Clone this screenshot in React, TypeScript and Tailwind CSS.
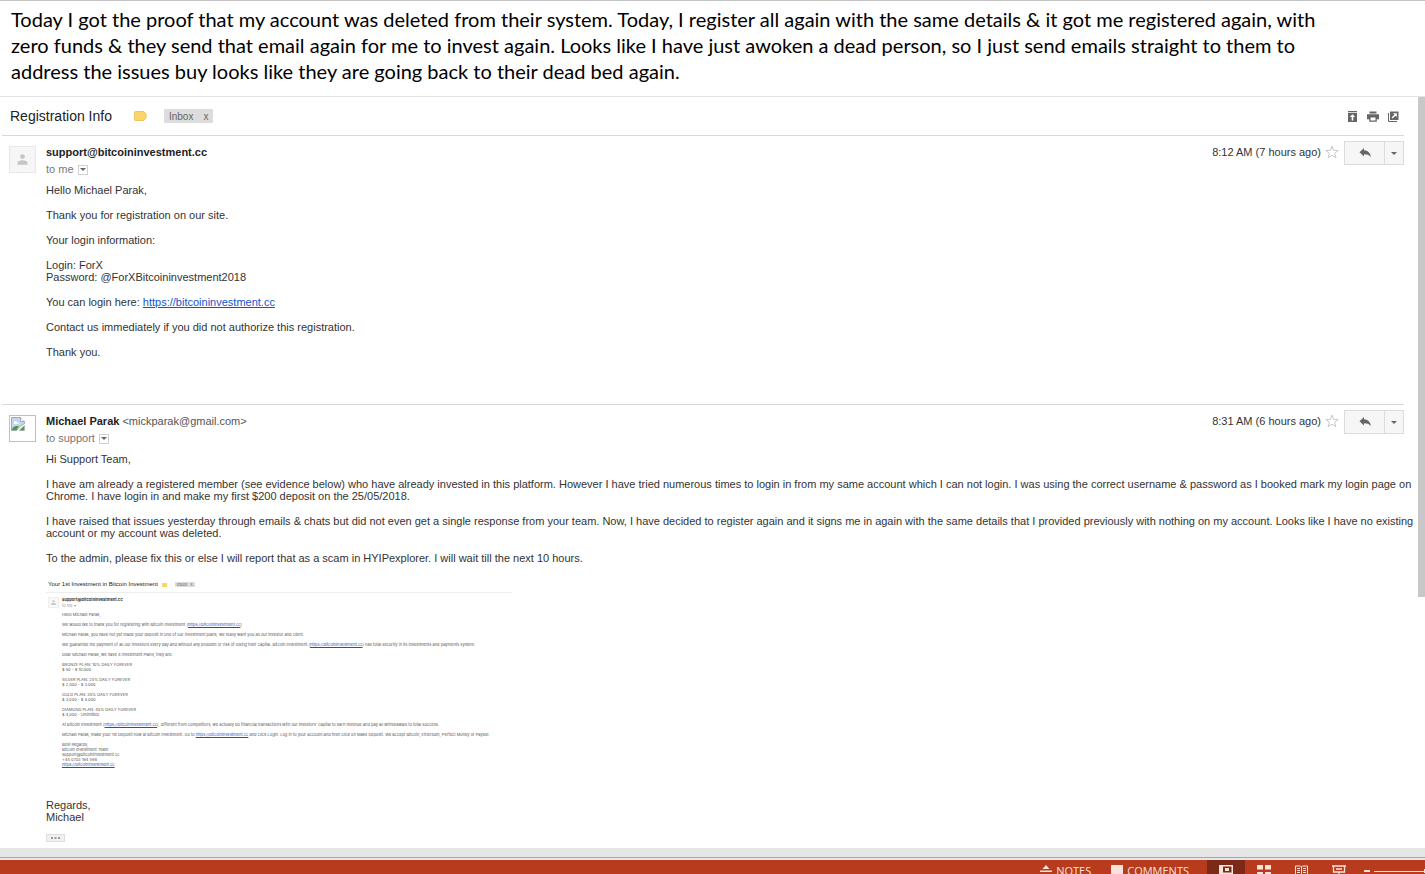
import type { ReactNode } from 'react';

const SITE = 'https://bitcoininvestment.cc';

function StarIcon() {
  return (
    <svg width="14" height="14" viewBox="0 0 14 14" fill="#fff" stroke="#c9c9c9" strokeWidth="1">
      <path d="M7 1l1.600 4.300 4.600.2-3.600 2.800 1.300 4.400L7 10.200l-3.900 2.500 1.300-4.400L.8 5.500l4.600-.2z" />
    </svg>
  );
}

function ReplyIcon() {
  return (
    <svg width="12" height="10" viewBox="0 0 12 10" fill="#666">
      <path d="M5 0v2.300c4 .2 6.400 2.600 6.900 7C10.200 6.900 8.200 6.300 5 6.300V8.600L.5 4.300z" />
    </svg>
  );
}

function Caret() {
  return (
    <svg width="6" height="3" viewBox="0 0 6 3" fill="#666">
      <path d="M0 0h6L3 3z" />
    </svg>
  );
}

function PersonAvatar() {
  return (
    <div className="flex size-[27px] shrink-0 items-center justify-center border border-[#e8e8e8] bg-[#f6f6f6]">
      <svg width="11" height="11" viewBox="0 0 11 11" fill="#c6c6c6">
        <circle cx="5.500" cy="2.600" r="2.400" />
        <path d="M.5 10.800V9c0-1.800 3-2.700 5-2.700s5 .9 5 2.700v1.800z" />
      </svg>
    </div>
  );
}

function BrokenAvatar() {
  return (
    <div className="size-[27px] shrink-0 border border-[#c0c0c0] bg-white p-px">
      <svg width="14" height="14" viewBox="0 0 14 14">
        <path d="M.5.5h9l4 4v2L9 9.500 5.500 13.500h-5z" fill="#c5d6f1" stroke="#a3a9b2" />
        <path d="M9.500.5v4h4" fill="#fff" stroke="#a3a9b2" />
        <path d="M3 5.500a1.500 1.500 0 013 0h1.500V7H2.500z" fill="#fff" />
        <path d="M1 13c0-3 3-4.500 7-4L5.500 13z" fill="#4f9a3e" />
        <path d="M13.500 8.500v5H8z" fill="#4f9a3e" stroke="#a3a9b2" strokeWidth=".5" />
      </svg>
    </div>
  );
}

interface MessageProps {
  avatar: ReactNode;
  from: ReactNode;
  to: string;
  time: string;
  children: ReactNode;
}

function Message({ avatar, from, to, time, children }: MessageProps) {
  return (
    <article className="ml-0.5 flex border-t border-[#d8d8d8] pt-[10px] pl-[7px]">
      {avatar}
      <div className="ml-[10px] min-w-0 flex-1">
        <header className="-mt-[5px] flex items-start">
          <div className="flex-1">
            <div className="mt-[5px] leading-[13px]">{from}</div>
            <div className="mt-1 flex items-center leading-[13px] text-[#777]">
              {to}
              <button
                type="button"
                aria-label="Show details"
                className="ml-1 flex size-[10px] items-center justify-center border border-[#d0d0d0] bg-white"
              >
                <Caret />
              </button>
            </div>
          </div>
          <span className="mt-[5px] leading-[13px]">{time}</span>
          <button type="button" aria-label="Star" className="mt-1 ml-1">
            <StarIcon />
          </button>
          <div className="ml-[5px] flex h-6 w-[60px] border border-[#dcdcdc] bg-[#f6f6f6]">
            <button type="button" aria-label="Reply" className="flex flex-1 items-center justify-center">
              <ReplyIcon />
            </button>
            <button
              type="button"
              aria-label="More"
              className="flex w-[19px] items-center justify-center border-l border-[#dcdcdc]"
            >
              <Caret />
            </button>
          </div>
        </header>
        {children}
      </div>
    </article>
  );
}

function SiteLink() {
  return (
    <a href={SITE} className="text-[#1155cc] underline">
      {SITE}
    </a>
  );
}

function Attachment() {
  return (
    <section className="mt-[13px] w-[466px] font-['Inter',sans-serif] text-[4px] leading-[5px] whitespace-nowrap text-[#555]">
      <div className="flex h-4 items-center border-b border-[#eee] pl-0.5">
        <h3 className="font-['Liberation_Sans',Arial,sans-serif] text-[6px] text-[#222]">
          Your 1st Investment in Bitcoin Investment
        </h3>
        <span className="ml-1 h-1 w-[5px] bg-[#f8d568]" />
        <span className="ml-2 bg-[#ddd] px-0.5 text-[#666]">Inbox &nbsp; x</span>
      </div>
      <div className="flex pt-1 pl-0.5">
        <div className="flex size-[11px] shrink-0 items-center justify-center border border-[#eee] bg-[#f8f8f8]">
          <svg width="5" height="5" viewBox="0 0 11 11" fill="#c6c6c6">
            <circle cx="5.500" cy="2.600" r="2.400" />
            <path d="M.5 10.800V9c0-1.800 3-2.700 5-2.700s5 .9 5 2.700v1.800z" />
          </svg>
        </div>
        <div className="ml-[3px] flex flex-col gap-[5px]">
          <div className="-mb-px">
            <p className="font-bold text-[#333]">support@bitcoininvestment.cc</p>
            <p className="mt-px text-[#999]">to me ▾</p>
          </div>
          <p>Hello Michael Parak,</p>
          <p>
            We would like to thank you for registering with Bitcoin Investment (<SiteLink />)
          </p>
          <p>
            Michael Parak, you have not yet made your deposit in one of our investment plans, we really want you
            as our investor and client
          </p>
          <p>
            We guarantee the payment of all our investors every day and without any problem or risk of losing
            their capital. Bitcoin Investment (<SiteLink />) has total security in its investments and payments
            system.
          </p>
          <p>Dear Michael Parak, we have 4 Investment Plans, they are:</p>
          <p>
            BRONZE PLAN: 10% DAILY FOREVER
            <br />$ 50 - $ 10.000
          </p>
          <p>
            SILVER PLAN: 25% DAILY FOREVER
            <br />$ 2,000 - $ 3.000
          </p>
          <p>
            GOLD PLAN: 35% DAILY FOREVER
            <br />$ 3,000 - $ 4.000
          </p>
          <p>
            DIAMOND PLAN: 45% DAILY FOREVER
            <br />$ 4,000 - Unlimited
          </p>
          <p>
            At Bitcoin Investment (<SiteLink />), different from competitors, we actually do financial
            transactions with our investors' capital to earn revenue and pay all withdrawals to total success.
          </p>
          <p>
            Michael Parak, make your 1st Deposit now at Bitcoin Investment. Go to <SiteLink /> and click Login.
            Log in to your account and then click on Make Deposit. We accept Bitcoin, Ethereum, Perfect Money or
            Payeer.
          </p>
          <p>
            Best Regards,
            <br />
            Bitcoin Investment Team
            <br />
            support@bitcoininvestment.cc
            <br />
            +44 0703 194 569
            <br />
            <SiteLink />
          </p>
        </div>
      </div>
    </section>
  );
}

function HeaderActions() {
  return (
    <div className="flex gap-[9px]">
      <button type="button" aria-label="Collapse all">
        <svg width="11" height="11" viewBox="0 0 11 11">
          <path d="M1 0h9v1.300H1zM1 2h9v9H1z" fill="#666" />
          <path d="M5.500 3.300L8.200 6H6.300v3.500H4.700V6H2.800z" fill="#fff" />
        </svg>
      </button>
      <button type="button" aria-label="Print all">
        <svg width="12" height="11" viewBox="0 0 12 11">
          <path d="M2.500.5h7v2h-7zM0 3.300h12v5H9.800v2.400H2.200V8.300H0z" fill="#666" />
          <path d="M3.500 6.500h5v3h-5z" fill="#fff" />
        </svg>
      </button>
      <button type="button" aria-label="In new window">
        <svg width="11" height="11" viewBox="0 0 11 11">
          <path d="M2 .5h8.500V9H2z" fill="#666" />
          <path d="M.5 2v8.500H9" fill="none" stroke="#666" />
          <path d="M5 2.200h3.800V6L7.500 4.700 4.500 7.500 3.600 6.600l2.900-3z" fill="#fff" />
        </svg>
      </button>
    </div>
  );
}

function StatusBar() {
  return (
    <footer className="flex h-[22px] shrink-0 items-center justify-end bg-[#b83b1d] font-['Open_Sans',sans-serif] text-[11px] text-[#f7e3dc]">
      <button type="button" className="flex items-center gap-1">
        <svg width="12" height="12" viewBox="0 0 12 12" fill="currentColor">
          <path d="M6 0l3.500 4h-7zM0 5.500h12V7H0zM0 9h12v1.500H0z" />
        </svg>
        NOTES
      </button>
      <button type="button" className="ml-5 flex items-center gap-1">
        <svg width="12" height="12" viewBox="0 0 12 12" fill="currentColor">
          <path d="M0 0h12v9H6l-2 2V9H0z" />
        </svg>
        COMMENTS
      </button>
      <button
        type="button"
        aria-label="Normal"
        className="ml-[18px] flex h-full w-[38px] items-center justify-center bg-[#7c2a17]"
      >
        <svg width="14" height="12" viewBox="0 0 14 12" fill="currentColor">
          <path d="M0 0h14v12H0zM4 1.500v6h8.500v-6zM4 9v1.500h8.500V9z" fillRule="evenodd" />
          <path d="M6 3h4v3H6z" />
        </svg>
      </button>
      <button type="button" aria-label="Slide sorter" className="ml-3">
        <svg width="14" height="12" viewBox="0 0 14 12" fill="currentColor">
          <path d="M0 0h6v4.500H0zM8 0h6v4.500H8zM0 7h6v4.500H0zM8 7h6v4.500H8z" />
        </svg>
      </button>
      <button type="button" aria-label="Reading view" className="ml-6">
        <svg width="13" height="13" viewBox="0 0 13 13" fill="none" stroke="currentColor">
          <path d="M.5 1h5l1 1 1-1h5v10h-5l-1 1-1-1h-5zM6.500 2v10M2 3.500h3M2 5.500h3M2 7.500h3M8 3.500h3M8 5.500h3M8 7.500h3" />
        </svg>
      </button>
      <button type="button" aria-label="Slide show" className="ml-6">
        <svg width="14" height="13" viewBox="0 0 14 13" fill="none" stroke="currentColor" strokeWidth="1.300">
          <path d="M0 1h14M1.500 1v6h11V1M4 4h6M7 7v5M4 12h6" />
        </svg>
      </button>
      <button type="button" aria-label="Zoom out" className="ml-[18px] h-0.5 w-1.5 bg-current" />
      <span className="ml-1 h-px w-[50px] bg-current" />
      <span className="h-1 w-px bg-current" />
    </footer>
  );
}

export default function App() {
  return (
    <div className="flex h-screen flex-col overflow-hidden bg-white font-['Liberation_Sans',Arial,sans-serif] text-[11px] text-[#333]">
      <p className="border-t border-[#c4c4c4] px-[11px] pt-[5px] pb-3 font-['Lato',sans-serif] text-[20px] leading-[26px] whitespace-nowrap text-black">
        Today I got the proof that my account was deleted from their system. Today, I register all again with the
        same details &amp; it got me registered again, with
        <br />
        zero funds &amp; they send that email again for me to invest again. Looks like I have just awoken a dead
        person, so I just send emails straight to them to
        <br />
        address the issues buy looks like they are going back to their dead bed again.
      </p>

      <div className="flex min-h-0 flex-1 border-t border-[#e4e4e4]">
        <main className="mr-[14px] min-w-0 flex-1">
          <div className="flex h-[38px] items-center pr-[5px] pl-[10px]">
            <h1 className="text-[14px] text-[#222]">Registration Info</h1>
            <svg className="ml-[22px]" width="13" height="10" viewBox="0 0 13 10">
              <path d="M1.500.5H9.500L12 3v4L9.500 9.500h-8a1 1 0 01-1-1v-7a1 1 0 011-1z" fill="#fbd567" stroke="#e9c75c" />
            </svg>
            <div className="ml-[17px] flex h-[14px] items-center gap-[10px] bg-[#ddd] px-[5px] text-[10px] text-[#666]">
              Inbox
              <button type="button" aria-label="Remove label">x</button>
            </div>
            <div className="ml-auto">
              <HeaderActions />
            </div>
          </div>

          <Message
            avatar={<PersonAvatar />}
            from={<b className="text-[#222]">support@bitcoininvestment.cc</b>}
            to="to me"
            time="8:12 AM (7 hours ago)"
          >
            <div className="mt-2 mb-[46px] flex flex-col gap-[13px] leading-[12px]">
              <p>Hello Michael Parak,</p>
              <p>Thank you for registration on our site.</p>
              <p>Your login information:</p>
              <p>
                Login: ForX
                <br />
                Password: @ForXBitcoininvestment2018
              </p>
              <p>
                You can login here: <SiteLink />
              </p>
              <p>Contact us immediately if you did not authorize this registration.</p>
              <p>Thank you.</p>
            </div>
          </Message>

          <Message
            avatar={<BrokenAvatar />}
            from={
              <>
                <b className="text-[#222]">Michael Parak</b>{' '}
                <span className="text-[#555]">&lt;mickparak@gmail.com&gt;</span>
              </>
            }
            to="to support"
            time="8:31 AM (6 hours ago)"
          >
            <div className="mt-2 flex flex-col gap-[13px] leading-[12px] whitespace-nowrap">
              <p>Hi Support Team,</p>
              <p>
                I have am already a registered member (see evidence below) who have already invested in this
                platform. However I have tried numerous times to login in from my same account which I can not
                login. I was using the correct username &amp; password as I booked mark my login page on
                <br />
                Chrome. I have login in and make my first $200 deposit on the 25/05/2018.
              </p>
              <p>
                I have raised that issues yesterday through emails &amp; chats but did not even get a single
                response from your team. Now, I have decided to register again and it signs me in again with the
                same details that I provided previously with nothing on my account. Looks like I have no existing
                <br />
                account or my account was deleted.
              </p>
              <p>
                To the admin, please fix this or else I will report that as a scam in HYIPexplorer. I will wait
                till the next 10 hours.
              </p>
            </div>
            <Attachment />
            <p className="mt-8 leading-[12px]">
              Regards,
              <br />
              Michael
            </p>
            <button
              type="button"
              aria-label="Show trimmed content"
              className="mt-[11px] flex h-2 w-[19px] items-center justify-center border border-[#ddd] bg-[#f1f1f1]"
            >
              <svg width="9" height="2" viewBox="0 0 9 2" fill="#999">
                <path d="M0 0h2v2H0zM3.500 0h2v2h-2zM7 0h2v2H7z" />
              </svg>
            </button>
          </Message>
        </main>
        <div className="h-[500px] w-[7px] bg-[#c8c8c8]" />
      </div>

      <div className="h-3 shrink-0 bg-[#e6e6e6] pt-[9px]">
        <div className="h-px bg-[#a3a8c0]" />
      </div>
      <div className="h-[14px] shrink-0 overflow-hidden">
        <StatusBar />
      </div>
    </div>
  );
}
